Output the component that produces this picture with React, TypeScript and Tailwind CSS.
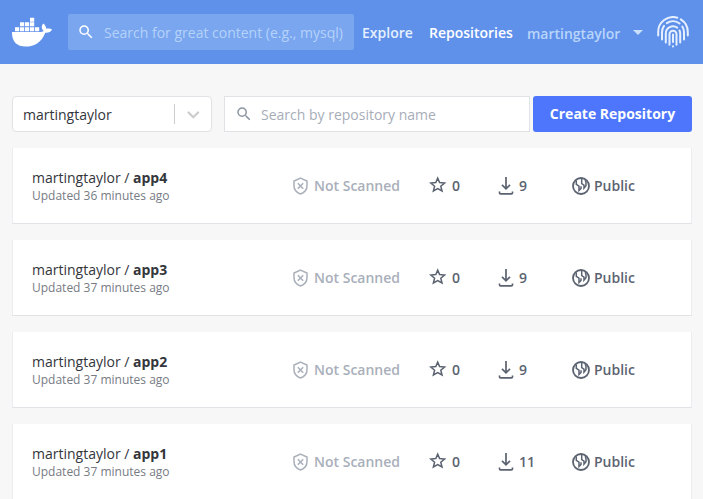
import React from "react";
import { MdSearch } from "react-icons/md";

const repositories = [
  { name: "app4", updated: "36 minutes ago", stars: 0, pulls: 9 },
  { name: "app3", updated: "37 minutes ago", stars: 0, pulls: 9 },
  { name: "app2", updated: "37 minutes ago", stars: 0, pulls: 9 },
  { name: "app1", updated: "37 minutes ago", stars: 0, pulls: 11 },
];

function DockerLogo() {
  return (
    <svg className="h-[30px] w-[40px] shrink-0" viewBox="0 0 40 30" fill="#fff">
      <path d="M18 .8h4.200v3.900H18zM8 5.300h4.200v4H8zM13 5.300h4.200v4H13zM18 5.300h4.200v4H18zM3 10.200h4.200v4H3zM8 10.200h4.200v4H8zM13 10.200h4.200v4H13zM18 10.200h4.200v4H18zM23 10.200h4.200v4H23z" />
      <path d="M0 15h27.500c1.800 0 3.300-.3 4.200-1-2.500-2.300-2.500-5-.5-7.600 1.900 1.300 3 3.300 3.100 5.300 1.900-.4 4.300-.1 5.700.8-1.100 2.400-3.500 3.400-6.700 3.200C29.500 25.200 22.800 29.600 13.500 29.600 4.500 29.600-.3 24.400 0 15z" />
    </svg>
  );
}

function FingerprintIcon() {
  return (
    <svg className="ml-[14px] h-8 w-8 shrink-0" viewBox="0 0 32 32" fill="none" stroke="#e5f0ff" strokeWidth="2" strokeLinecap="round">
      <path d="M1.200 19.500V16A14.800 14.800 0 0 1 20.300 1.700M23.800 3.400A14.800 14.800 0 0 1 30.800 16v3.500" />
      <path d="M5 23.500V16.500A11 11 0 0 1 7 9.800M9.800 7.200A11 11 0 0 1 22.600 7.500M25.300 10.500A11 11 0 0 1 27 16.500v7" />
      <path d="M8.800 26.500V17.500a7.200 7.200 0 0 1 11.400-5.900M22.500 14.500q.7 1.400.7 3v9" />
      <path d="M12.500 28.800V18.300a3.500 3.500 0 0 1 7 0v10.500M16 18.500v7.500M16 30.300v.2" />
    </svg>
  );
}

function ShieldIcon() {
  return (
    <svg className="h-[18px] w-[16px] shrink-0" viewBox="0 0 16 18" fill="none" stroke="currentColor" strokeWidth="1.500">
      <path d="M8.500 1.100 15 4v4.800c0 4-2.600 6.800-6.500 8.200C4.600 15.600 2 12.800 2 8.800V4z" />
      <path d="m5.800 6.300 5.400 5.400M11.200 6.300l-5.400 5.400" strokeWidth="1.500" />
    </svg>
  );
}

function StarIcon() {
  return (
    <svg className="mb-[2px] h-[17px] w-[18px] shrink-0" viewBox="0 0 18 17" fill="none" stroke="currentColor" strokeWidth="1.500">
      <path d="m8.700 2.100 1.900 4.500 5 .5-3.800 3.200 1.200 4.700-4.300-2.500L4.400 15l1.200-4.700-3.800-3.200 5-.5z" />
    </svg>
  );
}

function DownloadIcon() {
  return (
    <svg className="h-[18px] w-4 shrink-0" viewBox="0 0 16 18" fill="none" stroke="currentColor" strokeWidth="1.700">
      <path d="M8 0v11.500M4 7.800l4 4 4-4" />
      <path d="M1.500 14.500v1.200q0 1.100 1.100 1.100h10.800q1.100 0 1.100-1.100v-1.200" />
    </svg>
  );
}

function GlobeIcon() {
  return (
    <svg className="h-[18px] w-[18px] shrink-0" viewBox="0 0 18 18" fill="none" stroke="currentColor" strokeWidth="1.800">
      <circle cx="9" cy="9" r="8" />
      <path d="M4.300 3.500V7.300L7 9.200V13.500L9 11.500V9.300M9.700 1.500V6.700L12 8.200V11.200L14 8.700V5.500L13.200 3.200" strokeWidth="1.500" />
    </svg>
  );
}

function Header() {
  return (
    <header className="flex h-16 items-center bg-[#6091ea] pl-3">
      <DockerLogo />
      <div className="ml-4 flex h-9 w-[286px] shrink-0 items-center rounded-[2px] bg-[#79a6ef] pl-[9px]">
        <MdSearch className="h-[18px] w-[18px] text-white" />
        <span className="ml-[9px] text-[14px] text-[#b5d2fa]">Search for great content (e.g., mysql)</span>
      </div>
      <nav className="flex items-center text-[14px] font-semibold">
        <span className="ml-2 w-[67px] text-[#e5f0ff]">Explore</span>
        <span className="w-[98px] text-white">Repositories</span>
        <span className="w-[106px] pt-[2px] text-[#b8d5fb]">martingtaylor</span>
      </nav>
      <span className="h-0 w-0 border-x-[5px] border-t-[5px] border-x-transparent border-t-[#c9dffc]" />
      <FingerprintIcon />
    </header>
  );
}

function Toolbar() {
  return (
    <div className="flex h-9">
      <div className="flex w-[200px] items-center rounded-[4px] border border-[#e1e2e6] bg-white pl-[10px] text-[14px] text-[#33363b]">
        <span className="w-[151px]">martingtaylor</span>
        <span className="h-5 w-px bg-[#cccccc]" />
        <svg className="ml-3 h-3 w-[13px]" viewBox="0 0 13 12" fill="none" stroke="#ccc" strokeWidth="2.200" strokeLinecap="round" strokeLinejoin="round">
          <path d="m1.500 4.500 4.800 4.800 4.800-4.800" />
        </svg>
      </div>
      <div className="ml-3 flex w-[306px] items-center border border-[#e1e2e6] bg-white pl-[10px]">
        <MdSearch className="h-[18px] w-[18px] text-[#8f96a3]" />
        <span className="ml-2 text-[14px] text-[#a7adb8]">Search by repository name</span>
      </div>
      <button className="ml-[3px] w-[159px] rounded-[3px] bg-[#4d76fd] pb-[2px] text-[14px] font-bold text-white">Create Repository</button>
    </div>
  );
}

function RepositoryCard({ name, updated, stars, pulls }: (typeof repositories)[number]) {
  return (
    <article className="flex h-[76px] shrink-0 items-center border border-t-0 border-[#e1e2e6] border-x-[#ececf0] bg-white pl-[19px] text-[14px] font-semibold text-[#5b6371]">
      <div className="w-[260px] font-normal text-[#33363b]">
        <div className="leading-5">
          martingtaylor / <b className="font-bold">{name}</b>
        </div>
        <div className="text-[12px] leading-4 text-[#777b84]">Updated {updated}</div>
      </div>
      <div className="flex w-[137px] items-center gap-[6px] text-[#a9afba]">
        <ShieldIcon />
        <span>Not Scanned</span>
      </div>
      <div className="flex w-[69px] items-center gap-[5px]">
        <StarIcon />
        <span>{stars}</span>
      </div>
      <div className="flex w-[74px] items-center gap-[5px]">
        <DownloadIcon />
        <span>{pulls}</span>
      </div>
      <div className="flex items-center gap-1">
        <GlobeIcon />
        <span>Public</span>
      </div>
    </article>
  );
}

export default function App() {
  return (
    <div className="h-[499px] w-[703px] overflow-hidden bg-[#f7f7f7] font-['Open_Sans',sans-serif]">
      <Header />
      <main className="w-[692px] pl-3 pt-8">
        <Toolbar />
        <div className="mt-4 flex flex-col gap-4">
          {repositories.map((repository) => (
            <RepositoryCard key={repository.name} {...repository} />
          ))}
        </div>
      </main>
    </div>
  );
}
